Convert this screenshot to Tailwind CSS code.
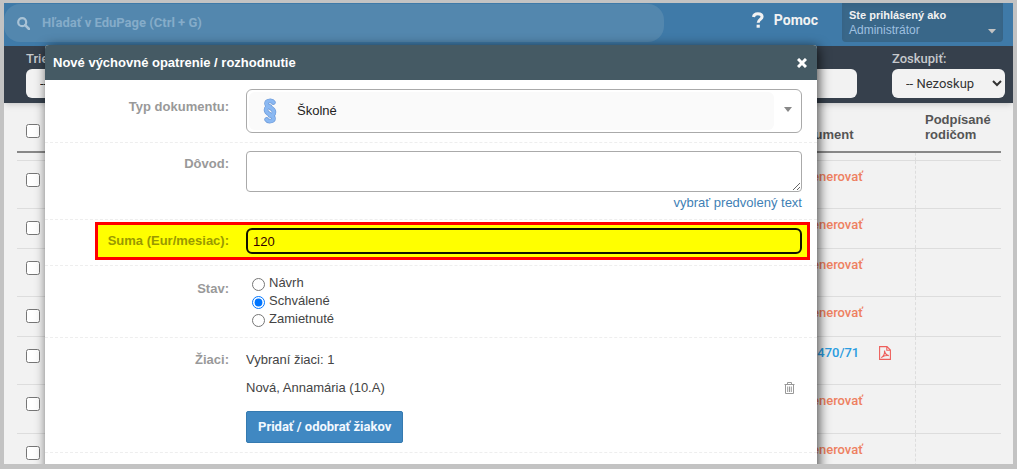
<!DOCTYPE html>
<html lang="sk">
<head>
    <meta charset="UTF-8">
    <meta name="viewport" content="width=device-width, initial-scale=1.0">
    <title>EduPage - Výchovné opatrenia</title>
    <script src="https://cdn.jsdelivr.net/npm/@tailwindcss/browser@4"></script>
</head>
<body class="h-screen overflow-hidden bg-[#c3c3c3] px-1 pt-[3px] pb-[5px] font-['Liberation_Sans',sans-serif] text-[13px] leading-[18px] text-[#444]">
<div class="relative flex h-full flex-col overflow-hidden bg-[#f2f2f2]">

    <!-- Horná lišta -->
    <header class="flex h-[43px] shrink-0 items-start bg-[#3f7aa8] pr-[10px]">
        <label class="mt-px flex h-[38px] w-[660px] items-center rounded-2xl bg-[#5387ae] pl-[13px] text-[#8fb3ce]">
            <svg class="size-[13px]" viewBox="0 0 13 13" fill="none" stroke="#a9c3d6" stroke-width="2.2"><circle cx="5.2" cy="5.2" r="4"/><path d="M8.2 8.2 12 12" stroke-width="2.6" stroke-linecap="round"/></svg>
            <input type="text" aria-label="Hľadať" placeholder="Hľadať v EduPage (Ctrl + G)" class="ml-3 flex-1 bg-transparent font-['Roboto'] font-bold outline-none placeholder:text-[#85acc9]">
        </label>
        <a href="#" class="mt-[8px] ml-auto flex items-center gap-[10px] font-['Roboto'] text-[14px] font-bold text-[#f2f2f2]">
            <svg class="h-4 w-3" viewBox="0 0 12 16" fill="none" stroke="#f2f2f2" stroke-width="3"><path d="M1.500 5C1.800 2.800 3.600 1.700 5.800 1.700c2.400 0 4.300 1.200 4.300 3.100 0 2.700-3.900 2.600-3.900 6"/><path d="M4.600 14.200h3.200"/></svg>
            Pomoc
        </a>
        <button type="button" class="ml-6 flex h-[39px] w-[161px] items-end justify-between rounded-b-sm bg-[#396789] px-[7px] pb-1 text-left text-[12px] leading-[15px] shadow-inner">
            <span class="flex flex-col text-[#9fc0e0]"><b class="text-[11px] text-[#f2f2f2]">Ste prihlásený ako</b>Administrátor</span>
            <svg class="mb-1 h-[5px] w-2" viewBox="0 0 8 5" fill="#c3c3c3"><path d="M0 0h8L4 4.500z"/></svg>
        </button>
    </header>

    <!-- Filtre -->
    <div class="flex h-[57px] shrink-0 items-start gap-[35px] bg-[#36404c] pt-1 pr-2 pl-[22px] font-['Roboto'] font-medium text-[#c6c9cc] shadow-md">
        <label class="flex flex-1 flex-col gap-px">Trie
            <input type="text" value="--" class="h-[29px] rounded-md bg-[#f2f2f2] px-[14px] font-normal text-[#222]">
        </label>
        <label class="flex w-[113px] flex-col gap-px">Zoskupiť:
            <select class="h-[29px] rounded-md bg-[#f2f2f2] pl-[10px] font-normal text-[#333]"><option>-- Nezoskup</option></select>
        </label>
    </div>

    <!-- Zoznam dokumentov -->
    <div class="pr-3 pl-[13px]">
        <table class="w-full table-fixed text-[#ee8060]">
            <thead>
                <tr class="h-[49px] border-b-2 border-[#888] text-left leading-[15px] text-[#555]">
                    <th class="w-[773px] pt-2 pl-[9px]"><input type="checkbox" aria-label="Označiť všetky" class="block size-[14px]"></th>
                    <th class="w-[125px] pb-[9px] align-bottom">Dokument</th>
                    <th class="pb-[9px] pl-[10px] align-bottom">Podpísané rodičom</th>
                </tr>
            </thead>
            <tbody class="align-top font-['Roboto'] font-medium [&_td]:pt-[7px]">
                <tr class="h-2 border-b border-[#ddd]"><th></th><th></th><th class="border-l border-dashed border-l-[#ddd]"></th></tr>
                <tr class="h-12 border-b border-[#ddd]"><td class="pl-[9px]"><input type="checkbox" aria-label="Riadok 1" class="mt-[5px] block size-[14px]"></td><td><a href="#">Vygenerovať</a></td><td class="border-l border-dashed border-l-[#ddd]"></td></tr>
                <tr class="h-10 border-b border-[#ddd]"><td class="pl-[9px]"><input type="checkbox" aria-label="Riadok 2" class="mt-[5px] block size-[14px]"></td><td><a href="#">Vygenerovať</a></td><td class="border-l border-dashed border-l-[#ddd]"></td></tr>
                <tr class="h-12 border-b border-[#ddd]"><td class="pl-[9px]"><input type="checkbox" aria-label="Riadok 3" class="mt-[5px] block size-[14px]"></td><td><a href="#">Vygenerovať</a></td><td class="border-l border-dashed border-l-[#ddd]"></td></tr>
                <tr class="h-10 border-b border-[#ddd]"><td class="pl-[9px]"><input type="checkbox" aria-label="Riadok 4" class="mt-[5px] block size-[14px]"></td><td><a href="#">Vygenerovať</a></td><td class="border-l border-dashed border-l-[#ddd]"></td></tr>
                <tr class="h-12 border-b border-[#ddd]"><td class="pl-[9px]"><input type="checkbox" aria-label="Riadok 5" class="mt-[5px] block size-[14px]"></td>
                    <td><a href="#" class="flex items-center gap-5 text-[#2a9ce0]">20/0470/71
                        <svg class="h-[14px] w-3" viewBox="0 0 12 14" fill="none" stroke="#ee5f5b" stroke-width="1.100"><path d="M.6.6h7.400l3.400 3.400v9.400H.6zM7.800.8v3.400h3.400"/><path d="M2.300 11.700C4 10.600 5.800 7.500 5.500 4.600c.4 3 2 4.600 4.300 5-2.600-.3-4.800.3-6.300 1.200"/></svg></a></td>
                    <td class="border-l border-dashed border-l-[#ddd]"></td></tr>
                <tr class="h-[49px] border-b border-[#ddd]"><td class="pl-[9px]"><input type="checkbox" aria-label="Riadok 6" class="mt-[5px] block size-[14px]"></td><td><a href="#">Vygenerovať</a></td><td class="border-l border-dashed border-l-[#ddd]"></td></tr>
                <tr class="h-12"><td class="pl-[9px]"><input type="checkbox" aria-label="Riadok 7" class="mt-[5px] block size-[14px]"></td><td><a href="#">Vygenerovať</a></td><td class="border-l border-dashed border-l-[#ddd]"></td></tr>
            </tbody>
        </table>
    </div>

    <!-- Dialóg -->
    <form role="dialog" aria-labelledby="nadpis" class="absolute top-[42px] right-[196px] -bottom-4 left-[41px] flex flex-col rounded-t bg-white shadow-[2px_2px_12px_rgba(0,0,0,0.7)]">
        <div class="flex h-[35px] shrink-0 items-center justify-between rounded-t bg-[#455a64] pr-[10px] pl-2 text-white">
            <h2 id="nadpis" class="font-bold">Nové výchovné opatrenie / rozhodnutie</h2>
            <button type="button" aria-label="Zavrieť"><svg class="size-[10px]" viewBox="0 0 10 10" stroke="#fff" stroke-width="3"><path d="m1 1 8 8M9 1 1 9"/></svg></button>
        </div>

        <div class="flex h-[63px] shrink-0 border-b border-dashed border-[#eee] pt-[9px]">
            <label for="typ" class="mt-[9px] w-[184px] text-right font-bold text-[#999]">Typ dokumentu:</label>
            <button type="button" id="typ" class="mr-[15px] ml-[17px] flex h-11 flex-1 items-center rounded-md border border-[#aaa] pr-[9px] pl-[2px] text-[#222]">
                <span class="flex h-[38px] flex-1 items-center gap-5 rounded-md bg-[#fafafa] pl-[14px]">
                    <svg class="h-[26px] w-[14px]" viewBox="0 0 14 26" fill="none" stroke-linecap="round"><g stroke="#6f9bd8" stroke-width="4.600"><path d="M10.500 4.500C9 2 3.500 2.500 3.500 5.500c0 4 7.500 4 7.500 8.500 0 2.500-2 3.500-4 3.500"/><path d="M3.500 21.500c1.500 2.500 7 2 7-1 0-4-7.500-4-7.500-8.500C3 9.500 5 8.500 7 8.500"/></g><g stroke="#8ab8f2" stroke-width="3.200"><path d="M10.500 4.500C9 2 3.500 2.500 3.500 5.500c0 4 7.500 4 7.500 8.500 0 2.500-2 3.500-4 3.500"/><path d="M3.500 21.500c1.500 2.500 7 2 7-1 0-4-7.500-4-7.500-8.500C3 9.500 5 8.500 7 8.500"/></g></svg>
                    Školné
                </span>
                <svg class="mb-1 ml-[10px] h-[5px] w-2" viewBox="0 0 8 5" fill="#888"><path d="M0 0h8L4 5z"/></svg>
            </button>
        </div>

        <div class="flex h-[77px] shrink-0 border-b border-dashed border-[#eee] pt-2">
            <label for="dovod" class="mt-1 w-[184px] text-right font-bold text-[#999]">Dôvod:</label>
            <div class="mr-[15px] ml-[17px] flex flex-1 flex-col">
                <textarea id="dovod" class="h-[41px] w-full rounded-sm border border-[#aaa]"></textarea>
                <a href="#" class="mt-[2px] self-end text-[#3f7fb5]">vybrať predvolený text</a>
            </div>
        </div>

        <div class="flex h-[46px] shrink-0 border-b border-dashed border-[#eee] pt-[2px] pr-[7px] pl-[50px]">
            <div class="flex h-[38px] flex-1 items-center border-3 border-[#f00] bg-[#ff0] pr-[5px]">
                <label for="suma" class="w-[131px] text-right font-bold text-[#999900]">Suma (Eur/mesiac):</label>
                <input id="suma" type="text" value="120" class="ml-[17px] h-[26px] min-w-0 flex-1 rounded-md border-2 border-[#111100] px-[5px] text-[#330000] outline-none">
            </div>
        </div>

        <fieldset class="flex h-[72px] shrink-0 border-b border-dashed border-[#eee] pt-2">
            <legend class="float-left mt-[6px] w-[184px] text-right font-bold text-[#999]">Stav:</legend>
            <div class="ml-[23px] flex flex-col">
                <label class="flex gap-1"><input type="radio" name="stav" class="mt-1 size-[13px]">Návrh</label>
                <label class="flex gap-1"><input type="radio" name="stav" checked class="mt-1 size-[13px]">Schválené</label>
                <label class="flex gap-1"><input type="radio" name="stav" class="mt-1 size-[13px]">Zamietnuté</label>
            </div>
        </fieldset>

        <div class="flex h-[115px] shrink-0 border-b border-dashed border-[#eee] pt-[13px]">
            <span class="w-[184px] text-right font-bold text-[#999]">Žiaci:</span>
            <div class="mr-[15px] ml-[17px] flex flex-1 flex-col">
                <p>Vybraní žiaci: 1</p>
                <div class="mt-[10px] flex items-center justify-between pr-[7px]">
                    Nová, Annamária (10.A)
                    <button type="button" aria-label="Odstrániť"><svg class="h-3 w-[11px]" viewBox="0 0 11 12" fill="none" stroke="#999"><path d="M.5 2.500h10M3.500 2.500v-2h4v2M1.500 3v8.500h8V3M3.700 4.500v5.500M5.500 4.500v5.500M7.300 4.500v5.500"/></svg></button>
                </div>
                <button type="button" class="mt-[14px] h-8 self-start rounded-xs border border-[#357ab0] bg-[#4088c2] px-[11px] font-['Roboto'] font-bold text-[#f2f8ff]">Pridať / odobrať žiakov</button>
            </div>
        </div>
    </form>
</div>
</body>
</html>
